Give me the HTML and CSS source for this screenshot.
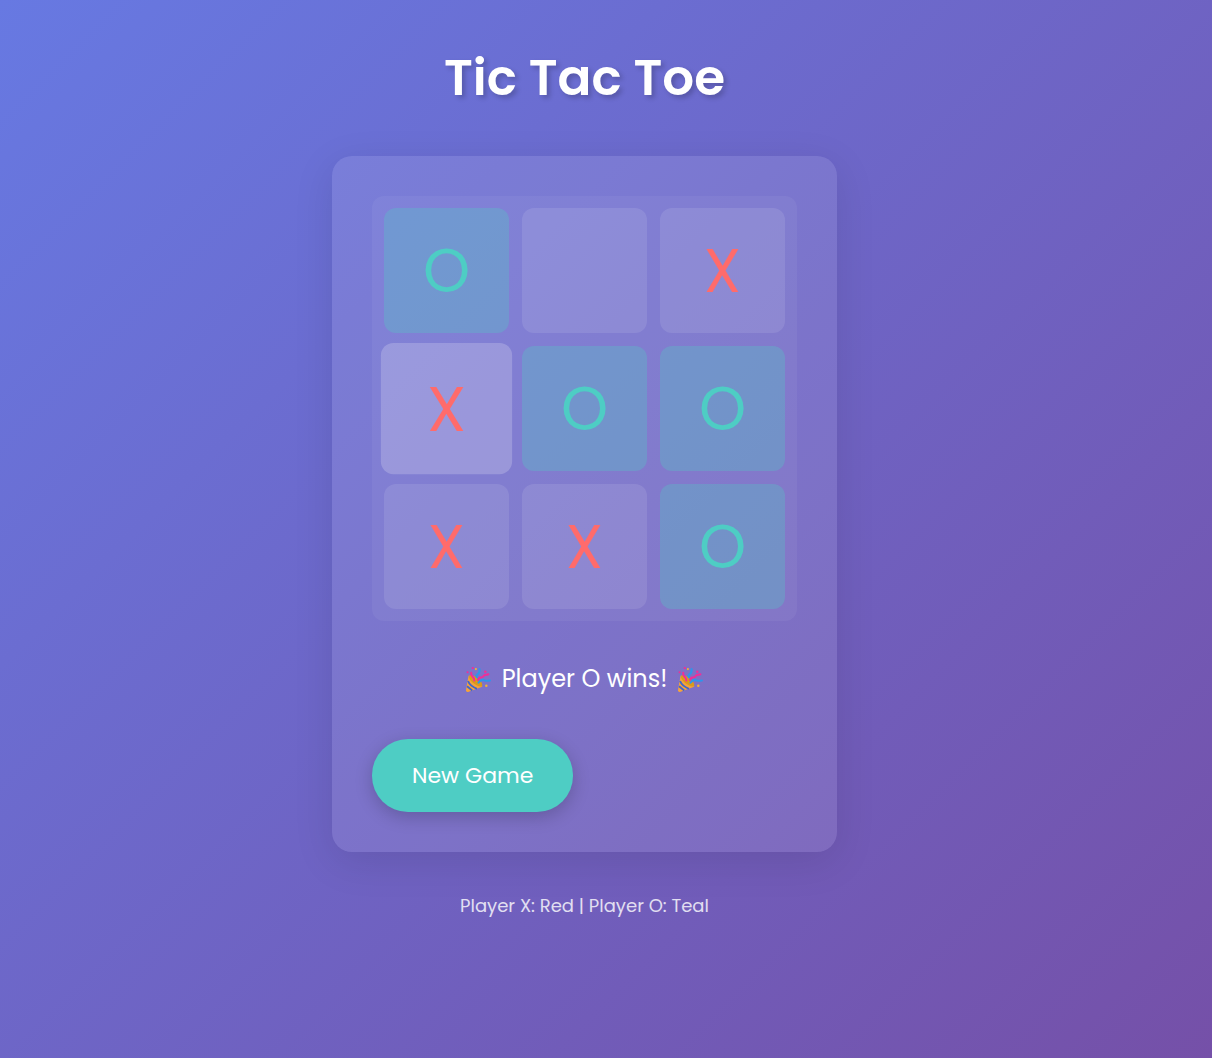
FILE: index.html
```html
<!DOCTYPE html>
<html lang="en">
<head>
<meta charset="utf-8">
<meta name="viewport" content="width=device-width, initial-scale=1">
<title>Tic Tac Toe</title>
<link rel="stylesheet" href="styles.css">
</head>
<body>
<svg width="0" height="0" class="sprite" aria-hidden="true">
  <symbol id="party" viewBox="0 0 24 24">
    <path fill="#f4a23c" d="M0 22 2.500 8.500C6 7 16 14 15.500 19L2 24C.8 24.300-.2 23.300 0 22z"/>
    <path fill="#d99a1c" d="M3 8.500C6 6 17 13 15.500 18.500c-4 2-14-6-12.500-10z"/>
    <path stroke="#3f66cc" stroke-width="1.800" fill="none" d="m1 18.500 5 4M2 13.500c1 3 5 6 8.500 7.500"/>
    <path stroke="#ee2f9a" stroke-width="2" fill="none" stroke-linecap="round" d="M8 13C8.500 9.500 4 9 5 5.500M11.500 12.500c.5-4 4-1 5.500-4C18.500 7 20.500 7.500 21.500 7"/>
    <path stroke="#2e96ea" stroke-width="2" fill="none" stroke-linecap="round" d="M10.500 10C8 6.500 14 8 13 2M12 15c3-4 5-2.500 6-2 2 .5 3 0 5 0"/>
    <circle cx="6.500" cy="1" r="1.100" fill="#ee2f9a"/>
    <circle cx="18.500" cy="4.500" r="1.200" fill="#ee2f9a"/>
    <circle cx="1.500" cy="5" r="1" fill="#ee2f9a"/>
    <circle cx="9.500" cy="2" r="1" fill="#f2b233"/>
    <circle cx="19.500" cy="18" r="1.200" fill="#f2b233"/>
  </symbol>
</svg>
<main class="game">
  <h1 class="title">Tic Tac Toe</h1>
  <section class="panel">
    <div class="board">
      <button class="cell o win" type="button">O</button>
      <button class="cell" type="button" aria-label="Empty"></button>
      <button class="cell x" type="button">X</button>
      <button class="cell x active" type="button">X</button>
      <button class="cell o win" type="button">O</button>
      <button class="cell o win" type="button">O</button>
      <button class="cell x" type="button">X</button>
      <button class="cell x" type="button">X</button>
      <button class="cell o win" type="button">O</button>
    </div>
    <p class="status" role="status">
      <svg class="emoji" aria-hidden="true"><use href="#party"/></svg>
      <span>Player O wins!</span>
      <svg class="emoji" aria-hidden="true"><use href="#party"/></svg>
    </p>
    <button class="new-game" type="button">New Game</button>
  </section>
  <p class="legend">Player X: Red | Player O: Teal</p>
</main>
</body>
</html>
```

FILE: styles.css
```css
* { box-sizing: border-box; }

body {
  margin: 0;
  min-height: 100vh;
  padding: 40px 43px 40px 0;
  background: linear-gradient(135deg, #6779e2 0%, #7550a8 100%);
  color: #fff;
  font-family: Poppins, Inter, sans-serif;
}

.sprite { position: absolute; }

.game {
  display: flex;
  flex-direction: column;
  align-items: center;
}

.title {
  margin: 0 0 40px;
  font-size: 50px;
  line-height: 76px;
  font-weight: 600;
  text-shadow: 3px 3px 5px rgba(0, 0, 0, 0.2);
}

.panel {
  padding: 40px;
  border-radius: 20px;
  background: rgba(255, 255, 255, 0.1);
  box-shadow: 0 10px 40px rgba(0, 0, 0, 0.1);
}

.board {
  display: grid;
  grid-template-columns: repeat(3, 125px);
  grid-auto-rows: 125px;
  gap: 13px;
  padding: 12px;
  border-radius: 12px;
  background: rgba(255, 255, 255, 0.05);
}

.cell {
  padding: 0;
  border: 0;
  border-radius: 12px;
  background: rgba(255, 255, 255, 0.1);
  font-family: inherit;
  font-size: 60px;
  line-height: 60px;
  font-weight: 400;
}

.cell.x { color: #ff6b6b; }
.cell.o { color: #4ecdc4; }
.cell.win { background: rgba(78, 205, 196, 0.3); }

.cell.active {
  background: rgba(255, 255, 255, 0.2);
  transform: scale(1.05);
}

.status {
  display: flex;
  justify-content: center;
  align-items: center;
  gap: 11px;
  margin: 38px 0 40px;
  font-size: 24px;
  line-height: 40px;
  font-weight: 400;
}

.emoji {
  width: 25px;
  height: 25px;
}

.new-game {
  padding: 18px 40px;
  border: 0;
  border-radius: 36px;
  background: #4ecdc4;
  box-shadow: 0 5px 18px rgba(0, 0, 0, 0.2);
  color: #fff;
  font-family: inherit;
  font-size: 22px;
  line-height: 37px;
  font-weight: 400;
}

.legend {
  margin: 40px 0 0;
  font-size: 18px;
  line-height: 28px;
  font-weight: 400;
  opacity: 0.8;
}
```
